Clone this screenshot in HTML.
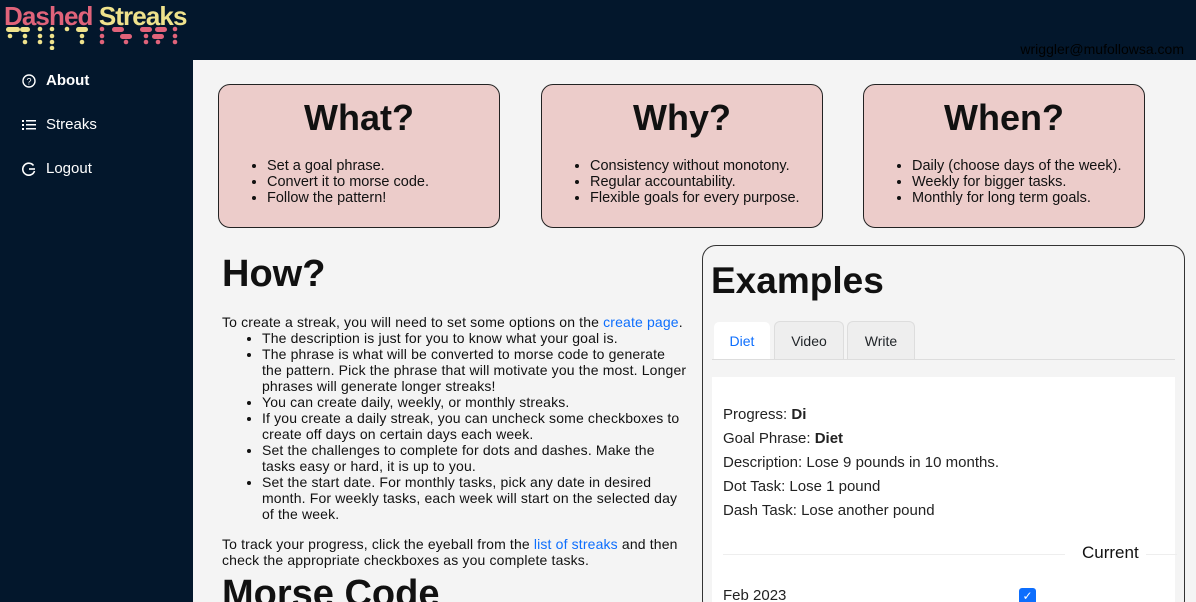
<!DOCTYPE html>
<html><head><meta charset="utf-8"><style>
*{box-sizing:border-box}
html,body{margin:0;width:1196px;height:602px;overflow:hidden}
body{background:#f4f4f4;font-family:"Liberation Sans",sans-serif;color:#212529;position:relative}
.hdr{position:absolute;left:0;top:0;width:1196px;height:60px;background:#03172c}
.side{position:absolute;left:0;top:60px;width:193px;height:542px;background:#03172c}
.logo{position:absolute;left:4px;top:1px;font-size:26px;font-weight:bold;letter-spacing:-0.9px}
.email{position:absolute;right:12px;top:41px;font-size:14px;color:#000}
.nav{position:absolute;left:22px;color:#fff;font-size:15px;display:flex;align-items:center}
.nav span{margin-left:10px}
.card{position:absolute;top:84px;width:282px;height:144px;background:#ecccca;border:1px solid #222;border-radius:12px}
.card h2{margin:12px 0 0;text-align:center;font-size:36px;font-weight:bold;color:#111}
.card ul{margin:19px 0 0;padding-left:48px;font-size:14.5px;line-height:16px;color:#111}
.main{position:absolute;left:222px;top:250px;padding-top:16px;width:467px;height:352px;overflow:hidden;font-size:14px;line-height:16px;color:#111;letter-spacing:0.15px}
.main h1{font-size:38px;margin:0 0 32px;font-weight:bold;letter-spacing:0}
.main ul{margin:0;padding-left:40px}
a{color:#0d6efd;text-decoration:none}
.ex{position:absolute;left:702px;top:245px;width:483px;height:370px;border:1px solid #333;border-radius:14px;background:#f4f4f4;overflow:hidden}
.ex h1{position:absolute;left:8px;top:14px;margin:0;font-size:37px;font-weight:bold;color:#111}
.tab{position:absolute;top:75px;height:38px;border:1px solid #ddd;border-bottom:none;border-radius:6px 6px 0 0;background:#eee;font-size:14px;text-align:center;line-height:38px}
.panel{position:absolute;left:9px;top:131px;width:463px;height:260px;background:#fff;font-size:15px;line-height:24px;color:#222}
</style></head><body>
<div class="hdr">
<div class="logo"><span style="color:#e0637a">Dashed</span> <span style="color:#efe28c">Streaks</span></div>
<svg style="position:absolute;left:0;top:24px" width="190" height="26">
<g fill="#efe28c"><rect x="6" y="3" width="14" height="5" rx="2.5"/><circle cx="10" cy="12" r="2.3"/><rect x="20" y="3" width="10" height="5" rx="2.5"/><circle cx="25" cy="12" r="2.3"/><circle cx="25" cy="18" r="2.3"/><circle cx="40" cy="5" r="2.3"/><circle cx="40" cy="12" r="2.3"/><circle cx="40" cy="18" r="2.3"/><circle cx="52" cy="5" r="2.3"/><circle cx="52" cy="12" r="2.3"/><circle cx="52" cy="18" r="2.3"/><circle cx="52" cy="24" r="2.3"/><circle cx="67" cy="5" r="2.3"/><rect x="76" y="3" width="12" height="5" rx="2.5"/><circle cx="82" cy="12" r="2.3"/><circle cx="82" cy="18" r="2.3"/></g>
<g fill="#e0637a"><circle cx="102" cy="5" r="2.3"/><circle cx="102" cy="12" r="2.3"/><circle cx="102" cy="18" r="2.3"/><rect x="112" y="3" width="12" height="5" rx="2.5"/><rect x="120" y="10" width="12" height="5" rx="2.5"/><circle cx="126" cy="18" r="2.3"/><rect x="140" y="3" width="12" height="5" rx="2.5"/><circle cx="146" cy="12" r="2.3"/><circle cx="146" cy="18" r="2.3"/><rect x="155" y="3" width="12" height="5" rx="2.5"/><rect x="152" y="10" width="12" height="5" rx="2.5"/><circle cx="158" cy="18" r="2.3"/><circle cx="175" cy="5" r="2.3"/><circle cx="175" cy="12" r="2.3"/><circle cx="175" cy="18" r="2.3"/></g>
</svg>
<div class="email">wriggler@mufollowsa.com</div>
</div>
<div class="side">
<div class="nav" style="top:12px"><svg width="14" height="14" viewBox="0 0 14 14"><circle cx="7" cy="7" r="6" fill="none" stroke="#fff" stroke-width="1.4"/><text x="7" y="10.5" font-size="9" fill="#fff" text-anchor="middle" font-family="Liberation Sans">?</text></svg><span style="font-weight:bold">About</span></div>
<div class="nav" style="top:56px"><svg width="14" height="14"><g fill="#fff"><rect x="0" y="2" width="2" height="2"/><rect x="4" y="2" width="10" height="1.5"/><rect x="0" y="6" width="2" height="2"/><rect x="4" y="6" width="10" height="1.5"/><rect x="0" y="10" width="2" height="2"/><rect x="4" y="10" width="10" height="1.5"/></g></svg><span>Streaks</span></div>
<div class="nav" style="top:100px"><svg width="14" height="14" viewBox="0 0 14 14"><path d="M11.5 3.5A6 6 0 1 0 12.5 9" fill="none" stroke="#fff" stroke-width="1.6"/><path d="M7 7h6" stroke="#fff" stroke-width="1.6"/></svg><span>Logout</span></div>
</div>
<div class="card" style="left:218px"><h2>What?</h2><ul><li>Set a goal phrase.</li><li>Convert it to morse code.</li><li>Follow the pattern!</li></ul></div>
<div class="card" style="left:541px"><h2>Why?</h2><ul><li>Consistency without monotony.</li><li>Regular accountability.</li><li>Flexible goals for every purpose.</li></ul></div>
<div class="card" style="left:863px"><h2>When?</h2><ul><li>Daily (choose days of the week).</li><li>Weekly for bigger tasks.</li><li>Monthly for long term goals.</li></ul></div>
<div class="main">
<h1>How?</h1>
<div>To create a streak, you will need to set some options on the <a>create page</a>.</div>
<ul><li>The description is just for you to know what your goal is.</li><li>The phrase is what will be converted to morse code to generate the pattern. Pick the phrase that will motivate you the most. Longer phrases will generate longer streaks!</li><li>You can create daily, weekly, or monthly streaks.</li><li>If you create a daily streak, you can uncheck some checkboxes to create off days on certain days each week.</li><li>Set the challenges to complete for dots and dashes. Make the tasks easy or hard, it is up to you.</li><li>Set the start date. For monthly tasks, pick any date in desired month. For weekly tasks, each week will start on the selected day of the week.</li></ul>
<div style="margin-top:14px">To track your progress, click the eyeball from the <a>list of streaks</a> and then check the appropriate checkboxes as you complete tasks.</div>
<h1 style="margin-top:6px;line-height:40px">Morse Code</h1>
</div>
<div class="ex">
<h1>Examples</h1>
<div style="position:absolute;left:9px;top:113px;width:463px;border-top:1px solid #ddd"></div>
<div class="tab" style="left:10px;width:58px;background:#fff;color:#0d6efd;border-color:#f4f4f4">Diet</div>
<div class="tab" style="left:71px;width:70px">Video</div>
<div class="tab" style="left:144px;width:68px">Write</div>
<div class="panel">
<div style="position:absolute;left:11px;top:26px">Progress: <b>Di</b><br>Goal Phrase: <b>Diet</b><br>Description: Lose 9 pounds in 10 months.<br>Dot Task: Lose 1 pound<br>Dash Task: Lose another pound</div>
<div style="position:absolute;left:11px;top:177px;width:342px;border-top:1px solid #eee"></div>
<div style="position:absolute;left:370px;top:164px;font-size:17px;color:#111">Current</div>
<div style="position:absolute;left:434px;top:177px;width:31px;border-top:1px solid #eee"></div>
<div style="position:absolute;left:11px;top:207px">Feb 2023</div>
<div style="position:absolute;left:307px;top:211px;width:17px;height:17px;background:#0d6efd;border-radius:3px;color:#fff;font-size:12px;line-height:17px;text-align:center">✓</div>
</div>
</div>
</body></html>
